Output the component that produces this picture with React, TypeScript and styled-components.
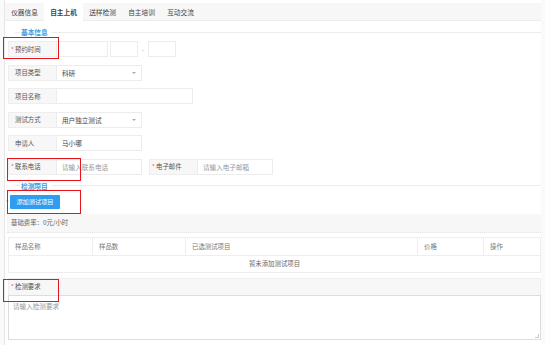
import styled, { createGlobalStyle } from "styled-components";

const GlobalStyle = createGlobalStyle`
  html, body {
    margin: 0;
    padding: 0;
    background: #fafafa;
  }
  body {
    width: 545px;
    height: 345px;
    overflow: hidden;
    font-family: "Noto Sans CJK SC", "Noto Sans", sans-serif;
    color: #555;
  }
`;

const Frame = styled.div`
  position: relative;
  margin-left: 4px;
  width: 537px;
  height: 345px;
  box-sizing: border-box;
  padding-top: 3px;
  background: #fff;
  border-left: 1px solid #e6e6e6;
`;

const TabBar = styled.div`
  display: flex;
  height: 17px;
  background: #f7f7f7;
  border-bottom: 1px solid #ececec;
`;

const Tab = styled.div<{ active?: boolean }>`
  display: flex;
  align-items: center;
  justify-content: center;
  width: 39px;
  font-size: 6.7px;
  color: #444;
  background: ${(p) => (p.active ? "#fff" : "transparent")};
  margin-bottom: ${(p) => (p.active ? "-1px" : "0")};
  font-weight: ${(p) => (p.active ? 600 : 400)};
`;

const Legend = styled.div<{ top: number }>`
  display: flex;
  align-items: center;
  margin-top: ${(p) => p.top}px;
  height: 8px;
  font-size: 6.7px;
  color: #3c9be0;
  font-weight: 600;
  &::before {
    content: "";
    width: 5px;
    margin: 0 1px 0 10px;
    border-top: 1px solid #ececec;
  }
  &::after {
    content: "";
    flex: 1;
    margin-left: 4px;
    border-top: 1px solid #ececec;
  }
`;

const Form = styled.div`
  display: flex;
  flex-direction: column;
  gap: 7.5px;
  margin-top: 5px;
  padding-left: 3px;
`;

const Row = styled.div`
  display: flex;
  align-items: stretch;
  height: 16px;
`;

const Label = styled.div<{ gap?: number }>`
  display: flex;
  align-items: center;
  width: 48px;
  box-sizing: border-box;
  padding-left: 6px;
  margin-left: ${(p) => p.gap ?? 0}px;
  background: #f7f7f7;
  border: 1px solid #eeeeee;
  border-right: none;
  font-size: 6.4px;
  color: #555;
  position: relative;
`;

const Star = styled.span`
  position: absolute;
  left: 2px;
  color: #f0605a;
  font-size: 6px;
`;

const Field = styled.div<{ w: number; gap?: number; muted?: boolean }>`
  display: flex;
  align-items: center;
  justify-content: space-between;
  width: ${(p) => p.w}px;
  margin-left: ${(p) => p.gap ?? 0}px;
  box-sizing: border-box;
  padding: 0 5px;
  border: 1px solid #ececec;
  font-size: 6.6px;
  color: ${(p) => (p.muted ? "#999" : "#444")};
  background: #fff;
`;

const Dash = styled.span`
  display: flex;
  align-items: center;
  margin-left: 4px;
  font-size: 6px;
  color: #999;
`;

const Caret = styled.span`
  width: 0;
  height: 0;
  border-left: 2.5px solid transparent;
  border-right: 2.5px solid transparent;
  border-top: 2.5px solid #aaa;
`;

const AddButton = styled.button`
  display: block;
  position: relative;
  margin: 5px 0 0 5px;
  width: 50px;
  height: 14px;
  padding: 0;
  border: none;
  border-radius: 1px;
  background: #2e9cf0;
  color: #fff;
  font-family: inherit;
  font-size: 6.2px;
`;

const ButtonStar = styled.span`
  position: absolute;
  left: -4px;
  top: 3px;
  color: #f0605a;
  font-size: 6px;
`;

const RateBar = styled.div`
  display: flex;
  align-items: center;
  margin: 5px 0 0 2px;
  height: 18px;
  padding-left: 4px;
  background: #f7f7f7;
  border-bottom: 1px dotted #e4e4e4;
  font-size: 6.4px;
  color: #666;
`;

const Table = styled.div`
  margin: 4px 0 0 3px;
  border: 1px solid #eeeeee;
  font-size: 6.4px;
  color: #777;
`;

const HeadRow = styled.div`
  display: grid;
  grid-template-columns: 84px 93px 232px 66px 1fr;
  height: 17px;
  border-bottom: 1px solid #eeeeee;
`;

const HeadCell = styled.div`
  display: flex;
  align-items: center;
  padding-left: 6px;
  border-right: 1px solid #eeeeee;
  &:last-child {
    border-right: none;
  }
`;

const EmptyRow = styled.div`
  display: flex;
  align-items: center;
  justify-content: center;
  height: 16px;
  color: #666;
`;

const ReqHeader = styled.div`
  position: relative;
  display: flex;
  align-items: center;
  margin: 5px 0 0 3px;
  height: 16px;
  padding-left: 6px;
  background: #f7f7f7;
  border: 1px solid #eeeeee;
  border-bottom: none;
  font-size: 6.4px;
  color: #555;
`;

const TextArea = styled.div`
  position: relative;
  margin-left: 3px;
  height: 45px;
  box-sizing: border-box;
  padding: 5px 4px;
  border: 1px solid #dddddd;
  font-size: 6.6px;
  color: #999;
  &::after {
    content: "";
    position: absolute;
    right: 1px;
    bottom: 1px;
    width: 3px;
    height: 3px;
    border-right: 1px solid #ccc;
    border-bottom: 1px solid #ccc;
  }
`;

const Mark = styled.div<{ x: number; y: number; w: number; h: number }>`
  position: absolute;
  left: ${(p) => p.x}px;
  top: ${(p) => p.y}px;
  width: ${(p) => p.w}px;
  height: ${(p) => p.h}px;
  box-sizing: border-box;
  border: 1.5px solid #e8141b;
  pointer-events: none;
`;

const tabs = ["仪器信息", "自主上机", "送样检测", "自主培训", "互动交流"];
const columns = ["样品名称", "样品数", "已选测试项目", "价格", "操作"];

export default function App() {
  return (
    <>
      <GlobalStyle />
      <Frame>
        <TabBar>
          {tabs.map((t, i) => (
            <Tab key={t} active={i === 1}>
              {t}
            </Tab>
          ))}
        </TabBar>

        <Legend top={7}>基本信息</Legend>

        <Form>
          <Row>
            <Label>
              <Star>*</Star>预约时间
            </Label>
            <Field w={52} />
            <Field w={28} gap={2} />
            <Dash>-</Dash>
            <Field w={28} gap={4} />
          </Row>
          <Row>
            <Label>项目类型</Label>
            <Field w={86}>
              科研
              <Caret />
            </Field>
          </Row>
          <Row>
            <Label>项目名称</Label>
            <Field w={137} />
          </Row>
          <Row>
            <Label>测试方式</Label>
            <Field w={86}>
              用户独立测试
              <Caret />
            </Field>
          </Row>
          <Row>
            <Label>申请人</Label>
            <Field w={86}>马小哪</Field>
          </Row>
          <Row>
            <Label>
              <Star>*</Star>联系电话
            </Label>
            <Field w={86} muted>
              请输入联系电话
            </Field>
            <Label gap={7}>
              <Star>*</Star>电子邮件
            </Label>
            <Field w={76} muted>
              请输入电子邮箱
            </Field>
          </Row>
        </Form>

        <Legend top={7}>检测项目</Legend>

        <AddButton>
          <ButtonStar>*</ButtonStar>添加测试项目
        </AddButton>

        <RateBar>基础费率：0元/小时</RateBar>

        <Table>
          <HeadRow>
            {columns.map((c) => (
              <HeadCell key={c}>{c}</HeadCell>
            ))}
          </HeadRow>
          <EmptyRow>暂未添加测试项目</EmptyRow>
        </Table>

        <ReqHeader>
          <Star>*</Star>检测要求
        </ReqHeader>
        <TextArea>请输入检测要求</TextArea>

        <Mark x={-2} y={37} w={56} h={22} />
        <Mark x={2} y={158} w={74} h={23} />
        <Mark x={2} y={190} w={74} h={24} />
        <Mark x={-2} y={279} w={56} h={23} />
      </Frame>
    </>
  );
}
